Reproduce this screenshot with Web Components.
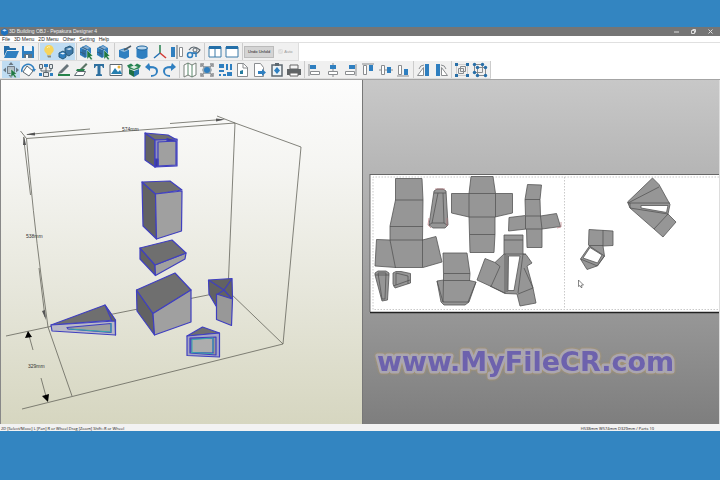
<!DOCTYPE html>
<html lang="en">
<head>
<meta charset="utf-8">
<title>3D Building OBJ - Pepakura Designer 4</title>
<style>
body{margin:0;height:100vh;background:#3385c1;font:5px/7px "Liberation Sans",Arial,sans-serif;color:#333}
</style>
</head>
<body>
<pk-window>
  <pk-titlebar slot="top">3D Building OBJ - Pepakura Designer 4</pk-titlebar>
  <pk-menubar slot="top"></pk-menubar>
  <pk-toolbars slot="top"></pk-toolbars>
  <pk-view3d slot="views"></pk-view3d>
  <pk-view2d slot="views"></pk-view2d>
  <pk-status slot="bottom"><span>2D [Select/Move] L [Pan] R or Wheel Drag [Zoom] Shift+R or Wheel</span><span slot="info">H538mm W574mm D329mm / Parts 10</span></pk-status>
</pk-window>
<script>
const B = '#2f7fc0', G = '#8a8d90', D = '#5d6870';
const ICONS = {
  open: `<path d="M1 2h5l1 2h6v2H4L1 12z" fill="#246ca8"/><path d="M4 7h12l-3 7H1z" fill="${B}"/>`,
  save: `<path d="M2 2h11l1 1v11H2z" fill="${B}"/><path d="M4 2h8v5H4z" fill="#eef4f8"/><path d="M4 10h8v4H4z" fill="#5d7588"/><path d="M6 11h2v3H6z" fill="#fff"/>`,
  bulb: `<path d="M8 1a4.5 4.5 0 0 0-3 8q1 1 1 2h4q0-1 1-2a4.500 4.500 0 0 0-3-8z" fill="#f7d45c"/><path d="M6 4q1-2 3-1" stroke="#fff3ad" fill="none"/><path d="M6 11.500h4v2H7z" fill="#8b8b78"/>`,
  cubes: `<path d="M7 4l5-2 3 2v5l-4 3-4-2z" fill="#3c78a8" stroke="#285878"/><path d="M8 5l4-1 2 1-3 1z" fill="#d8e8f4"/><path d="M1 9l4-2 3 2v4l-3 2-4-2z" fill="${B}" stroke="#285878"/><path d="M2 9.500l3-1 2 1-2 1z" fill="#e9f3fa"/>`,
  cubecur: `<path d="M1 4l6-3 5 3v7l-6 3-5-3z" fill="${B}"/><path d="M2 4l5-2 4 2-5 2z" fill="#87add0"/><path d="M6 6v7M3 3l5 2.500M4 5.500v6M1 8l5 2" stroke="#315d80" fill="none"/><path d="M8 6l6 6-2.500.3 2 2.700-1.500 1-2-2.700-2 2z" fill="#1f7843" stroke="#fff" stroke-width=".4"/>`,
  cubepin: `<path d="M2 6l6-2 4 2v7l-4 2-6-2z" fill="${B}"/><path d="M3 6.500l5-1.500 3 1.500-4 1.500z" fill="#8cb9dc"/><path d="M7 6l7-4" stroke="#4a5a66" stroke-width="1.500"/>`,
  cyl: `<path d="M2.500 4v9q5.500 4 11 0V4z" fill="${B}"/><ellipse cx="8" cy="4" rx="5.500" ry="2" fill="#b9d6ec" stroke="#1f669f"/>`,
  axis: `<path d="M8 9V1" stroke="#26804f" stroke-width="1.500"/><path d="M8 9l-6 5" stroke="#2472b5" stroke-width="1.500"/><path d="M8 9l6 5" stroke="#d23b35" stroke-width="1.500"/>`,
  mirror: `<path d="M2 3h4v10H2z" fill="${B}"/><path d="M8 1v14" stroke="${D}"/><path d="M10.500 3.500h3v9h-3z" fill="#fff" stroke="${G}"/>`,
  rotview: `<path d="M3 6q4-6 11 0-3 5-7 3" fill="none" stroke="${D}" stroke-width="1.200"/><circle cx="9" cy="6" r="2" fill="none" stroke="${D}"/><circle cx="4" cy="11" r="2.500" fill="none" stroke="${B}" stroke-width="1.500"/><path d="M6 9h4v4" fill="none" stroke="${B}" stroke-width="1.500"/>`,
  split: `<path d="M2 3h12v10H2zM8 3v10" fill="#fff" stroke="#3b7ba8"/><path d="M2 2h12v3H2z" fill="#246fa8"/>`,
  single: `<path d="M2 3h12v10H2z" fill="#fff" stroke="#3b7ba8"/><path d="M2 2h12v3H2z" fill="#246fa8"/>`,
  move: `<path d="M4.500 4.500h7v7h-7z" fill="#b4c0c8" stroke="#6f7d88"/><path d="M8 0l2.500 3h-5zM8 16l-2.500-3h5zM0 8l3-2.500v5zM16 8l-3-2.500v5z" fill="#6a7883"/><path d="M8 7l6 5-2.500.3 2 2.700-1.500 1-2-2.700-2 2z" fill="#1f7843" stroke="#fff" stroke-width=".4"/>`,
  rotate: `<path d="M2 10A6 6 0 0 1 14 7" fill="none" stroke="${B}" stroke-width="1.500"/><path d="M7 4l6 5-4 5-6-4z" fill="#fff" stroke="${D}"/><path d="M12 7h4l-2 3z" fill="${B}"/>`,
  join: `<path d="M1.500 2.500h3v4h-3zM11.500 2.500h3v4h-3zM5.500 10.500h5v4h-5z" fill="#e3e7e9" stroke="${D}"/><path d="M6 2h4v3H6zM1 11h3v3H1zM12 11h3v3h-3z" fill="${B}"/><path d="M8 5v5M3 7v2h10V7" stroke="${D}" fill="none"/>`,
  edge: `<path d="M3 10l8-8 2 2-7 7-4 1z" fill="#68747a"/><path d="M2 12h12v2H2z" fill="#26824a"/>`,
  flap: `<path d="M1.500 13.500l3-4h8l-2 4z" fill="#fff" stroke="${D}"/><path d="M6 8l7-7 1.500 1.500L9 8z" fill="#5b7466"/><path d="M4 7h8l-1 2H3z" fill="#26824a"/>`,
  text: `<path d="M3 2h10v4h-1l-1-2H9.500v8l1.500.5V14H5v-1.500l1.500-.5V4H5L4 6H3z" fill="#2d6f9f"/>`,
  image: `<path d="M2 2.500h12v11H2z" fill="#fff" stroke="${D}"/><path d="M3 12l4-6 3 4 2-2 2 4z" fill="#267faf"/><circle cx="11" cy="5" r="1.500" fill="#e8b43a"/>`,
  pack: `<path d="M3 7l5 2v6l-5-3z" fill="#207045"/><path d="M8 9l5-2v5l-5 3z" fill="#2878aa"/><path d="M8 4l3-2.500 4 2-2 3-5 1.500-5-1.500-2-3 4-2z" fill="#278453"/><path d="M4 5l4-1.500L12 5 8 7z" fill="#dcebe2"/>`,
  undo: `<path d="M5 1L1 5l5 4V6.500q6-1 6 3T7 13v2q7-1 7-6T6 4z" fill="${B}"/>`,
  redo: `<path d="M11 1l4 4-5 4V6.500q-6-1-6 3T9 13v2q-7-1-7-6t8-5z" fill="${B}"/>`,
  map: `<path d="M2 3l4-2 4 2 4-2v12l-4 2-4-2-4 2z" fill="#fff" stroke="#778078"/><path d="M6 1v12M10 3v12" stroke="#59886a"/>`,
  fit: `<path d="M2 5V2h3M11 2h3v3M14 11v3h-3M5 14H2v-3" stroke="${G}" fill="none" stroke-width="1.500"/><path d="M3 3l10 10M13 3L3 13" stroke="${G}" stroke-width="1.500"/><path d="M5 4h6l2 4-2 4H5L3 8z" fill="#9aa7b0"/><circle cx="8" cy="8" r="3" fill="${B}"/>`,
  layout: `<path d="M2 2h5v4H2zM9 2h2v6H9zM13 2h2v6h-2zM2 8h5v2H2zM2 12h2v2H2zM6 12h3v2H6zM10 10h5v4h-5z" fill="${B}"/>`,
  page: `<path d="M3.500 1.500h6l4 4v9h-10z" fill="#fff" stroke="${G}"/><path d="M9 1v5h5" fill="none" stroke="${G}"/><path d="M6 9l3-1v4H6z" fill="#287d9e"/>`,
  export: `<path d="M3.500 1.500h6l3 4v9h-9z" fill="#fff" stroke="${G}"/><path d="M7 9h4V7l4 3.500-4 3.500v-2H7z" fill="${B}"/>`,
  clip: `<path d="M3 3h10v11H3z" fill="#edf3f6" stroke="${D}" stroke-width="1.500"/><path d="M6 1h4v3H6z" fill="${D}"/><path d="M8 5l3 3.500L8 12 5 8.500z" fill="${B}"/>`,
  print: `<path d="M4 3h8v4H4z" fill="#f4f4f4" stroke="#666"/><path d="M1 7h14v6H1z" fill="#606466"/><path d="M4 11h8v3H4z" fill="#fff" stroke="#666"/>`,
  al: `<path d="M2 2v12" stroke="${G}"/><path d="M3 3h6v4H3z" fill="${B}"/><path d="M3.500 9.500h9v3h-9z" fill="#fff" stroke="${G}"/>`,
  ac: `<path d="M8 1v14" stroke="${G}"/><path d="M5 3h6v4H5z" fill="${B}"/><path d="M3.500 9.500h9v3h-9z" fill="#fff" stroke="${G}"/>`,
  ar: `<path d="M14 2v12" stroke="${G}"/><path d="M7 3h6v4H7z" fill="${B}"/><path d="M3.500 9.500h9v3h-9z" fill="#fff" stroke="${G}"/>`,
  at: `<path d="M2 2h12" stroke="${G}"/><path d="M3.500 3.500h3v9h-3z" fill="#fff" stroke="${G}"/><path d="M9 3h4v6H9z" fill="${B}"/>`,
  am: `<path d="M1 8h14" stroke="${G}"/><path d="M3.500 3.500h3v9h-3z" fill="#fff" stroke="${G}"/><path d="M9 5h4v6H9z" fill="${B}"/>`,
  ab: `<path d="M2 14h12" stroke="${G}"/><path d="M3.500 3.500h3v9h-3z" fill="#fff" stroke="${G}"/><path d="M9 7h4v6H9z" fill="${B}"/>`,
  rl: `<path d="M9 2h4v12H9z" fill="${B}"/><path d="M1.500 13.500h6v-8z" fill="#fff" stroke="${G}"/><path d="M3 7q1-4 5-4" fill="none" stroke="${G}"/>`,
  rr: `<path d="M3 2h4v12H3z" fill="${B}"/><path d="M8.500 13.500h6l-6-8z" fill="#fff" stroke="${G}"/><path d="M8 3q4 0 5 4" fill="none" stroke="${G}"/>`,
  group: `<path d="M2.500 2.500h11v11h-11z" fill="none" stroke="#aaa" stroke-dasharray="1 1"/><path d="M4.500 6.500h5v5h-5zM6.500 4.500h5v5h-5z" fill="none" stroke="${G}"/><path d="M1 1h3v3H1zM12 1h3v3h-3zM1 12h3v3H1zM12 12h3v3h-3z" fill="#286fa8"/>`,
  ungroup: `<path d="M2.500 2.500h8v8h-8zM5.500 5.500h8v8h-8z" fill="none" stroke="${G}"/><g fill="#286fa8"><circle cx="2.500" cy="2.500" r="1.700"/><circle cx="10.500" cy="2.500" r="1.700"/><circle cx="2.500" cy="10.500" r="1.700"/><circle cx="5.500" cy="5.500" r="1.700"/><circle cx="13.500" cy="5.500" r="1.700"/><circle cx="5.500" cy="13.500" r="1.700"/><circle cx="13.500" cy="13.500" r="1.700"/></g>`
};

const define = (name, css, html) => customElements.define(name, class extends HTMLElement {
  constructor() {
    super();
    this.attachShadow({mode: 'open'}).innerHTML =
      `<style>${css}</style>` + (typeof html === 'function' ? html(this) : html);
  }
});

define('pk-tool', `:host{display:block;flex:1;min-width:0}
button{display:grid;place-items:center;width:100%;height:100%;padding:0;border:0;background:none}
:host([on]) button{background:#bfdcf2}
svg{width:16px;height:16px}`,
  el => `<button type="button" aria-label="${el.getAttribute('name')}"><svg viewBox="0 0 16 16">${ICONS[el.getAttribute('name')]}</svg></button>`);

define('pk-group', `:host{display:flex;height:100%;padding-right:1px;border-right:1px solid #ccc;box-sizing:border-box}`, `<slot></slot>`);

define('pk-window', `:host{display:flex;flex-direction:column;height:100vh;box-sizing:border-box;padding:27px 0 49px}
main{display:grid;grid-template-columns:362fr 358fr;flex:1;min-height:0}
.top,.bottom{flex:none}`,
  `<div class="top"><slot name="top"></slot></div><main><slot name="views"></slot></main><div class="bottom"><slot name="bottom"></slot></div>`);

define('pk-titlebar', `:host{display:flex;align-items:center;height:9px;background:#757575;color:#eee;padding:0 1px 0 1px}
svg{width:7px;height:8px;margin-right:1px}
.t{flex:1}
button{border:0;background:none;padding:0;width:17px;height:9px;display:grid;place-items:center}
button svg{width:5px;height:5px;margin:0;fill:none;stroke:#ddd}`,
  `<svg viewBox="0 0 6 7"><path d="M3 0l3 2v3L3 7 0 5V2z" fill="#1d72c0"/><path d="M1 2l2-1 2 1-2 1z" fill="#cbe4fa"/></svg><span class="t"><slot></slot></span>
<button aria-label="Minimize"><svg viewBox="0 0 5 5"><path d="M0 3h5"/></svg></button>
<button aria-label="Restore"><svg viewBox="0 0 5 5"><path d="M.5 1.500h3v3h-3zM1.500.5h3v3"/></svg></button>
<button aria-label="Close"><svg viewBox="0 0 5 5"><path d="M.5.5l4 4M4.500.5l-4 4"/></svg></button>`);

define('pk-menubar', `:host{display:block;background:#fff;border-bottom:1px solid #e0e0e0}
nav{display:flex;gap:4px;padding-left:2px;height:6px}
button{border:0;background:none;padding:0;font:inherit;line-height:6px;color:#222}`,
  `<nav>${['File', '3D Menu', '2D Menu', 'Other', 'Setting', 'Help'].map(m => `<button>${m}</button>`).join('')}</nav>`);

const group = (w, list) => `<pk-group style="width:${w}px">${list.split(' ').map(n =>
  `<pk-tool name="${n.replace('*', '')}"${n.endsWith('*') ? ' on' : ''}></pk-tool>`).join('')}</pk-group>`;

define('pk-toolbars', `:host{display:block;background:#fff;border-bottom:1px solid #a4a4a4}
.row{display:flex;width:max-content;height:18px;background:#f0f0f0;padding-left:2px;gap:1px;box-sizing:border-box;border-bottom:1px solid #ddd}
.undo{font:inherit;font-size:4px;align-self:center;height:12px;padding:0 3px;border:1px solid #bbb;background:#d4d4d4;color:#222}
label{display:flex;align-items:center;gap:1px;font-size:4px;color:#999;padding:0 6px 0 3px;border-right:1px solid #ddd}
input{width:5px;height:5px;margin:0;opacity:.5}`,
  `<div class="row">${group(37, 'open save')}${group(37, 'bulb* cubes*')}${group(37, 'cubecur cubecur')}${group(89, 'cubepin cyl axis mirror rotview')}${group(37, 'split single')}
<button class="undo">Undo Unfold</button><label><input type="checkbox" checked disabled>Auto</label></div>
<div class="row">${group(178, 'move* rotate join edge flap text image pack undo redo')}${group(124, 'map fit layout page export clip print')}${group(108, 'al ac ar at am ab')}${group(37, 'rl rr')}${group(38, 'group ungroup')}</div>`);

const poly = (pts, fill) => `<polygon points="${pts}" fill="${fill}"/>`;
const DARK = '#626262', TOP = '#6f6f6f', LIGHT = '#a0a0a0';

define('pk-view3d', `:host{display:block;min-width:0;min-height:0;border-left:1px solid #888;background:linear-gradient(#fcfcfc,#f5f5f2 25%,#e7e7dc 60%,#d6d6c0)}
svg{display:block;width:100%;height:100%}
text{font-size:5px;fill:#333}`,
`<svg viewBox="1 80 361 344">
<g fill="none" stroke="#65655c" stroke-width=".8">
<path d="M20.500 131L26.500 138.500L235 123L301 147L283 344L22 409M26.500 138.500Q33 214 41 275L48 327L72 396M217 116L235 123L228 291L283 344M6 336L48 327L228 291"/>
<path d="M27 134.500L90 129M170 123.500L222 119.500M23.500 137L30.500 195M39 268L45 317M28 332L33 350M41 378L47 400"/></g>
<path d="M26 134.500l9-2v3zM225 119.500l-9-1v3zM24 136l-1 9 3 0zM46 320l-4-9 3-1z" fill="#555"/>
<path d="M28 331l-3 7 7-1zM48 402l-6-6 7-2z" fill="#000"/>
<text x="122" y="131">574mm</text><text x="26" y="238">538mm</text><text x="28" y="368">329mm</text>
<g stroke="#3f3fc0" stroke-width="1.200" stroke-linejoin="round">
${poly('145,133 155,140 155,167 145,160', DARK)}${poly('145,133 168,135 177,140 155,140', TOP)}${poly('155,140 177,139 177,166 155,167', '#8f8fbc')}${poly('158,142 176,141 176,165 158,166', LIGHT)}<path d="M155 159v8l3-1v-7zM167 138v3l9 0" fill="#3c3c9c"/>
${poly('142,182 155.500,194 156.500,239 143,226', DARK)}${poly('142,182 170,181 182,190 155.500,194', TOP)}${poly('155.500,194 182,191 181.500,231 156.500,239', LIGHT)}
${poly('140,248 155,265 155.500,275.500 140,259', DARK)}${poly('155,265 186,253 185,259 155.500,275.500', LIGHT)}${poly('140,248 172,240 186,253 155,265', TOP)}
${poly('136.500,290 153,313.500 154.500,335 137,311', DARK)}${poly('136.500,290 175,273 191,290 153,313.500', TOP)}${poly('153,313.500 191,290 191,322 154.500,335', LIGHT)}
${poly('208.500,280 232,278.500 232.500,299 216,306 209,294', DARK)}<path d="M208.500 280L224 290L232 278.500M224 290L216.500 295M224 290L232 299" fill="none"/>${poly('216.500,294 232.500,299 231.500,325.500 216.500,319.500', '#989898')}
${poly('187,336 202.500,327 219.500,333', TOP)}${poly('187,336 219.500,333 219.500,357 187,355.500', '#a5a5c4')}${poly('190,338 216,337 216,355 190,353', '#989898')}${poly('191,339 213,338 213,353 191,352.500', '#adadad')}
${poly('51,325 105,305 115,320', TOP)}${poly('105,305 115.500,320 115.500,335 112,321', DARK)}${poly('51,325 115,321 115.500,335 52,331', '#b9b9c6')}${poly('67,327.500 111,323.500 111,332.500 68,329', LIGHT)}
</g>
<path d="M192 352V339.500L213 338V352M191 352.500L213 353.500M70 329L111 332V323" fill="none" stroke="#35a9ab" stroke-width="1"/>
</svg>`);

define('pk-view2d', `:host{display:block;min-width:0;min-height:0;border-left:1px solid #777;border-right:1px solid #ddd;background:linear-gradient(#c8c8c8,#a5a5a5 50%,#7e7e7e)}
svg{display:block;width:100%;height:100%}
.mark{font:bold 27px "DejaVu Sans",Verdana,sans-serif;fill:#6d62ad;stroke:#aaa6b0;stroke-width:5px;stroke-linejoin:round;paint-order:stroke;filter:drop-shadow(0 0 1px #b99b5c)}`,
`<svg viewBox="363 80 356 344">
<path d="M370 174.500h349v138h-349z" fill="#fff"/><path d="M370 174.500h349M370 174v138" stroke="#666" stroke-width="1" fill="none"/><path d="M370 312.500h349" stroke="#222" stroke-width="1.500"/>
<path d="M719 177H373V309.500H719M564.500 177V309" fill="none" stroke="#bbb" stroke-dasharray="1.500 1.500" stroke-width=".8"/>
<g fill="#969696" stroke="#555" stroke-width=".8" stroke-linejoin="round">
<path d="M395.500 178.500H422L423 200 422.500 240 436 236.500 442 262 423 267.500H396L375 266 376.500 239.500 390 240V226L395.500 200z"/>
<path d="M434 191l3-2h6l3 2 2 34-3 3h-12l-4-3z"/>
<path d="M471 176.500h22l2.500 17h17V213l-17.500 4v17l-1 18.500h-24l-1-35.500-17.500-4v-19.500H469z"/>
<path d="M527.500 184.500l14 .5-1.500 14.500.5 16.500 16-2.500 4 13-18.500 2.500v18.500h-15l-.5-18.500-18 2 .5-13.500 16.500-2-.5-16z"/>
<path d="M443 253h24l3 20.500-.5 7 6.500 1.500-7 20-4 3h-21l-3-3-4-21 6.500-1v-6.500z"/>
<path d="M504 235h19v19l3 .5 6 8.500-5 3 6 22 3 15-16 3-3-12-12-.5-15-7.500-13-6 8-21.500 10 4 9-8.500z"/>
<path d="M375 273l3-2h8l3 2v2l-1.500 25-5.500 1-7-26z"/><path d="M393 273l3-1.500h5l9.500 2v9.500l-15.500 5-2-4z"/>
<path d="M652.500 178l6.500 6.500 11 20-2 9.500 8 8-13 15-9-8-24-21-2.500-6z"/>
<path d="M589 229.500l24 1.500v14.500l-10 .5 1.500 10-7.500 10-10 3.500-6.500-10.500 9-13-1-1z"/></g>
<g fill="none" stroke="#4d4d4d" stroke-width=".7">
<path d="M395 200h28M390 226.500h33M390 240h33M422.500 240v27M390 240l5.500 28"/>
<path d="M434 193h12M438 193l-6 30h12l-1-30M429 225l3-2M444 223l3 2"/>
<path d="M469 193.500h26.500M469 217h26M469 193.500V217M495.500 193.500V217M470 234.500h25"/>
<path d="M525 199.500h15M525.500 216h15M526.500 229h15.500M525.500 216v13M540.500 216l1.500 13"/>
<path d="M443.500 273.500H470M443.500 280.500H470M443.500 280l-.5 22H469M437 281l6 21M476 282l-8 20"/>
<path d="M504 240h19M504 254h22M505 254v39M523 254l-5 39M507 255v37M495 262.500l5 4-9 20M490 286l15 7M524 268l9 20-15 6"/>
<path d="M378 273l4 26h3l1-26zM375 275h14M396 273v12l14-5M396 273l12 3v8M396 285l-3 1"/>
<path d="M659 187l-31 16h42M630 203v5l38 6M668 214l-14 15"/>
<path d="M603 230v16M589 245.500h14M589.500 246l15 10-7 10-17-7"/></g>
<path d="M508.500 256H520L514 290.500h-6zM641 205.500h27l-1.500 7L641 208zM590 247.500l12 7.500-4.500 8L583 258z" fill="#fff" stroke="#555" stroke-width=".8"/>
<path d="M429 218l-1 7 3 3M447 218v8M435 189h10M561 222v5l-4 1" fill="none" stroke="#b87a80" stroke-width=".7"/>
<path d="M578.500 280v6.500l1.500-1 1 2h1l-.5-2.500h2z" fill="#fff" stroke="#555" stroke-width=".7"/>
<text class="mark" x="377" y="371">www.MyFileCR.com</text>
</svg>`);

define('pk-status', `:host{display:flex;justify-content:space-between;height:7px;background:#f2f2f2;padding:0 66px 0 1px;font:4px/9px "Open Sans","Noto Sans",sans-serif;white-space:nowrap;color:#111}`,
  `<slot></slot><slot name="info"></slot>`);
</script>
</body>
</html>
